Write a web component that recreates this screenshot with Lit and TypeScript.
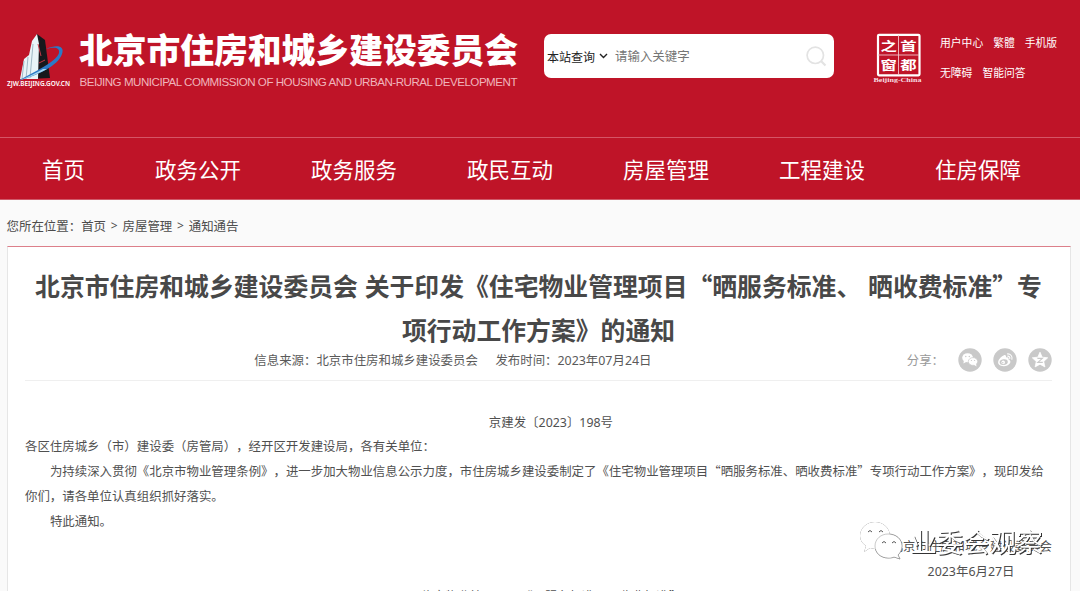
import { LitElement, html, css, svg } from "lit";
import { customElement } from "lit/decorators.js";

const NAV = ["首页", "政务公开", "政务服务", "政民互动", "房屋管理", "工程建设", "住房保障"];
const QUICK = [
  ["用户中心", "繁體", "手机版"],
  ["无障碍", "智能问答"],
];

@customElement("site-header")
class SiteHeader extends LitElement {
  static styles = css`
    :host { display: block; background: #bf1428; color: #fff; }
    .top { height: 137px; display: flex; align-items: flex-start; }
    .brand { display: block; width: 544px; height: 110px; flex: none; }
    .search {
      width: 290px; height: 44px; margin-top: 34px; flex: none; box-sizing: border-box;
      background: #fff; border-radius: 7px; display: flex; align-items: center;
      padding: 0 7px 0 3px; font-size: 12px; color: #222;
    }
    .arrow { width: 9px; height: 6px; margin: 0 7px 0 4px; }
    .hint { color: #757575; font-size: 12.45px; flex: 1; }
    .glass { width: 22px; height: 22px; }
    .seal { width: 50px; height: 54px; margin: 32px 0 0 39px; flex: none; }
    .quick { margin: 28px 0 0 17px; font-size: 10.8px; white-space: nowrap; }
    .row { display: flex; gap: 10px; height: 29.5px; line-height: 29.5px; }
    nav {
      height: 61px; border-top: 1px solid #d55566; border-bottom: 1px solid #cf5a69;
      display: flex; gap: 70px; padding-left: 42px; box-sizing: content-box;
      font-size: 21.5px; line-height: 61px; white-space: nowrap; overflow: hidden;
    }
    .en { font: 11.6px "Liberation Sans", Arial, sans-serif; }
    .cn { font: 900 33.8px "Noto Sans CJK SC", sans-serif; }
    .url { font: 600 6.8px "Noto Sans", sans-serif; }
    .mark { font: 700 20px "Noto Sans CJK SC", sans-serif; }
    .sealname { font: 700 6.6px "Liberation Serif", serif; }
  `;
  render() {
    return html`
      <div class="top">
        <svg class="brand" viewBox="0 0 544 110">
          <path d="M28 79 L34 41 L37 34 L45 40 L50 78 Z" fill="#17181c" />
          <path d="M20 79 L24 59 L29 55 L32 41 L37 34 L39 44 L38 79 Z" fill="#e8f4f8" />
          <path d="M24 61 L22 79 M28 57 L26 79 M33 44 L30 78" stroke="#9fb9c6" stroke-width="1" fill="none" />
          <path d="M38 44 L41 56 M39 63 L45 60" stroke="#c33a48" stroke-width="1" />
          <path d="M46 49 C57 44 65 46 62 54 C58 66 38 75 18 81 C34 72 56 62 59 53 C60 47 54 47 46 49 Z" fill="#2b7ac6" />
          <path d="M18 81 C30 77 40 73 47 69 L43 69 C36 73 28 77 18 81 Z" fill="#a8d8f0" />
          <text class="url" x="7" y="86" textLength="63" lengthAdjust="spacingAndGlyphs" fill="#fff">ZJW.BEIJING.GOV.CN</text>
          <text class="cn" x="79" y="62.5" textLength="439" fill="#fff">北京市住房和城乡建设委员会</text>
          <text class="en" x="79.5" y="86" textLength="438" fill="#f0b5bc">BEIJING MUNICIPAL COMMISSION OF HOUSING AND URBAN-RURAL DEVELOPMENT</text>
        </svg>
        <div class="search">
          <span>本站查询</span>
          <svg class="arrow" viewBox="0 0 9 6"><path d="M1 1 L4.5 4.5 L8 1" fill="none" stroke="#222" stroke-width="1.4" /></svg>
          <span class="hint">请输入关键字</span>
          <svg class="glass" viewBox="0 0 22 22" fill="none" stroke="#e3e3e3">
            <circle cx="10.3" cy="10.3" r="8.2" stroke-width="1.7" />
            <path d="M16 16 L20.5 20.5" stroke-width="2.2" />
          </svg>
        </div>
        <svg class="seal" viewBox="0 0 50 54">
          <rect x="5" y="2.8" width="41.5" height="40.5" rx="1" fill="none" stroke="#fff" stroke-width="2.2" />
          <path d="M25.5 3 V43 M5 23 H46" stroke="#f3c3c9" stroke-width="0.9" />
          <text class="mark" transform="translate(7.5 18.6) scale(0.82 0.62)" fill="#fff">之</text>
          <text class="mark" transform="translate(27.3 18.6) scale(0.82 0.62)" fill="#fff">首</text>
          <text class="mark" transform="translate(7.5 38.2) scale(0.82 0.62)" fill="#fff">窗</text>
          <text class="mark" transform="translate(27.3 38.2) scale(0.82 0.62)" fill="#fff">都</text>
          <text class="sealname" x="0.5" y="50.3" textLength="48" lengthAdjust="spacingAndGlyphs" fill="#f8dfe2">Beijing-China</text>
        </svg>
        <div class="quick">
          ${QUICK.map((r) => html`<div class="row">${r.map((t) => html`<span>${t}</span>`)}</div>`)}
        </div>
      </div>
      <nav>${NAV.map((t) => html`<span>${t}</span>`)}</nav>
    `;
  }
}

const wechat = svg`
  <ellipse cx="9.6" cy="9.7" rx="5.4" ry="4.5" fill="#fff"/><path d="M6 12 L5.4 15.6 L9 13.6Z" fill="#fff"/>
  <ellipse cx="15" cy="13.5" rx="4.7" ry="3.9" fill="#fff" stroke="#c9c9c9" stroke-width=".7"/><path d="M15.5 16.6 L18.5 18.4 L18 15.4Z" fill="#fff"/>
  <g fill="#c9c9c9"><circle cx="7.8" cy="8.5" r=".7"/><circle cx="11.3" cy="8.5" r=".7"/><circle cx="13.4" cy="12.5" r=".6"/><circle cx="16.6" cy="12.5" r=".6"/></g>`;
const weibo = svg`
  <path d="M11 7.2 C12.6 6.6 13.4 7.8 13 9.4 C15 8.9 16 9.7 15.4 11.2 C20 13.4 16 18.2 10.8 18.2 C6.5 18.2 4.6 16 5.2 13.5 C5.8 11 8.6 8 11 7.2Z" fill="#fff"/>
  <ellipse cx="10.7" cy="14.1" rx="4.1" ry="2.9" fill="#c9c9c9" transform="rotate(-8 10.7 14.1)"/>
  <circle cx="10.2" cy="14.4" r="1.8" fill="#fff"/><circle cx="9.8" cy="14.8" r=".7" fill="#c9c9c9"/>
  <path d="M14.6 5.9 A4.2 4.2 0 0 1 18.9 11.3 M14.8 8.1 A2 2 0 0 1 16.8 10.6" fill="none" stroke="#fff" stroke-width="1.1" stroke-linecap="round"/>`;
const qzone = svg`
  <path d="M12 4.2 L14.2 9.2 L19.7 9.8 L15.7 13.5 L16.9 18.9 L12 16.2 L7.1 18.9 L8.3 13.5 L4.3 9.8 L9.8 9.2Z" fill="#fff" stroke="#fff" stroke-width=".8" stroke-linejoin="round"/>
  <path d="M9.4 10.4 H14.4 L9.8 14.4 H14.8" fill="none" stroke="#c9c9c9" stroke-width="1.1"/>`;

@customElement("notice-article")
class NoticeArticle extends LitElement {
  static styles = css`
    :host {
      display: block; box-sizing: border-box; width: 1064px; height: 345px; margin-left: 7px; overflow: hidden;
      background: #fff; border: 1px solid #e6e6e6; border-bottom: 0; border-top-color: #dc7f8a;
      padding: 16px 18px 0 17px; color: #505050; font-size: 12.43px;
    }
    h1 { margin: 0; font-size: 24.83px; line-height: 44px; font-weight: 700; text-align: center; white-space: nowrap; color: #484848; }
    h1 div { display: flex; justify-content: center; gap: 6.8px; }
    .num { font-family: "Noto Sans", sans-serif; font-size: 12.4px; }
    .meta { height: 28.5px; display: flex; border-bottom: 1px solid #efefef; color: #5a5a5a; white-space: nowrap; line-height: 18px; }
    .source { margin-left: 229.3px; }
    .date { margin-left: 17.5px; flex: 1; }
    .share { color: #999; display: flex; align-items: center; height: 24px; margin-top: -3.5px; }
    .share svg { width: 24px; height: 24px; margin-left: 11px; }
    .share span { margin-right: 3px; }
    .body { padding-top: 29px; line-height: 24.9px; white-space: nowrap; }
    .body p { margin: 0; height: 24.9px; }
    .indent { text-indent: 24.9px; }
    .center { text-align: center; text-indent: 24.9px; }
    .right { text-align: right; }
    .body .day { padding-right: 37.5px; }
    .signed { position: relative; }
    .watermark { position: absolute; right: 8px; top: -15.5px; width: 185px; height: 42px; }
    .wm { font: 400 26.6px "Noto Sans CJK SC", sans-serif; fill: #fff; filter: drop-shadow(1px 1px 0 #333); }
    .bubbles { filter: drop-shadow(0.7px 0.7px 0 #555); }
  `;
  render() {
    return html`
      <h1>
        <div><span>北京市住房和城乡建设委员会</span><span>关于印发《住宅物业管理项目“晒服务标准、</span><span>晒收费标准”专</span></div>
        <div>项行动工作方案》的通知</div>
      </h1>
      <div class="meta">
        <span class="source">信息来源：北京市住房和城乡建设委员会</span>
        <span class="date">发布时间：<span class="num">2023</span>年<span class="num">07</span>月<span class="num">24</span>日</span>
        <div class="share">
          <span>分享：</span>
          ${[wechat, weibo, qzone].map((g) => html`<svg viewBox="0 0 24 24"><circle cx="12" cy="12" r="11.7" fill="#c9c9c9" />${g}</svg>`)}
        </div>
      </div>
      <div class="body">
        <p class="center">京建发〔<span class="num">2023</span>〕<span class="num">198</span>号</p>
        <p>各区住房城乡（市）建设委（房管局），经开区开发建设局，各有关单位：</p>
        <p class="indent">为持续深入贯彻《北京市物业管理条例》，进一步加大物业信息公示力度，市住房城乡建设委制定了《住宅物业管理项目“晒服务标准、晒收费标准”专项行动工作方案》，现印发给</p>
        <p>你们，请各单位认真组织抓好落实。</p>
        <p class="indent">特此通知。</p>
        <p class="right signed">北京市住房和城乡建设委员会
          <svg class="watermark" viewBox="0 0 185 42">
            <g class="bubbles" fill="#fff">
              <path d="M16 4 C24 4 31 10 31 18 C31 26 24 31 16 31 L11 30 L5 34 L7 28 C3 25 1 22 1 18 C1 10 8 4 16 4Z" />
              <path d="M29 16 C37 16 43 21 43 28 C43 32 41 35 39 37 L41 41 L35 39 C33 40 31 40 29 40 C22 40 16 35 16 28 C16 21 22 16 29 16Z" stroke="#777" stroke-width=".4" />
            </g>
            <g fill="none" stroke="#555" stroke-width="1"><path d="M9 14 Q11 11 13 14 M20 14 Q22 11 24 14 M23 25 Q25 22 27 25 M33 25 Q35 22 37 25" /></g>
            <text class="wm" x="51" y="34">业委会观察</text>
          </svg>
        </p>
        <p class="right day"><span class="num">2023</span>年<span class="num">6</span>月<span class="num">27</span>日</p>
        <p class="center">住宅物业管理项目“晒服务标准、晒收费标准”</p>
      </div>
    `;
  }
}

@customElement("app-root")
class AppRoot extends LitElement {
  static styles = css`
    :host {
      display: block; height: 591px; overflow: hidden; background: #fafafa;
      font-family: "Noto Sans CJK SC", sans-serif; text-spacing-trim: space-all;
    }
    .crumbs { height: 46px; line-height: 52px; padding-left: 6.5px; font-size: 12.45px; color: #4c4c4c; display: flex; gap: 4.8px; white-space: nowrap; }
    .crumbs .lead { margin-right: -4.8px; }
    .gt { font-family: "Noto Sans", sans-serif; font-size: 12px; }
  `;
  render() {
    return html`
      <site-header lang="zh-CN"></site-header>
      <div class="crumbs" lang="zh-CN">
        <span class="lead">您所在位置：</span><span>首页</span><span class="gt">&gt;</span><span>房屋管理</span><span class="gt">&gt;</span><span>通知通告</span>
      </div>
      <notice-article lang="zh-CN"></notice-article>
    `;
  }
}
